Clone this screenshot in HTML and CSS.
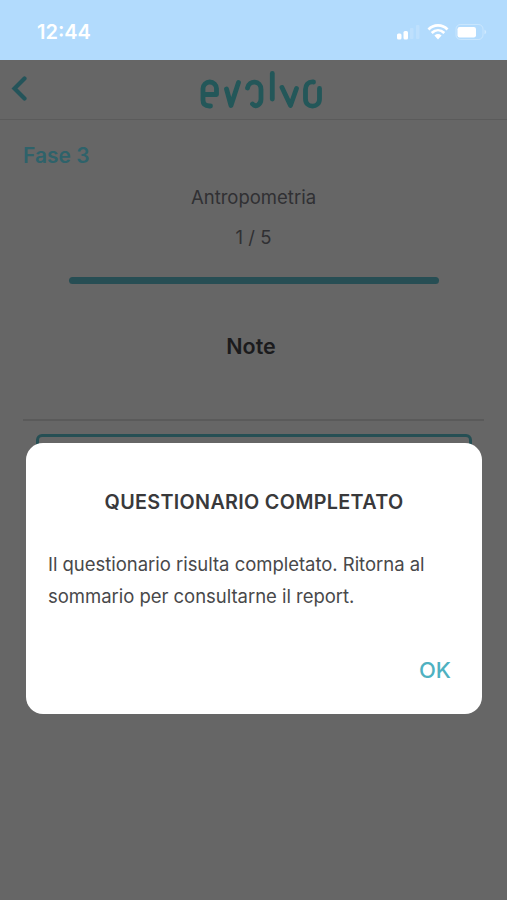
FILE: index.html
```html
<!DOCTYPE html>
<html lang="it">
<head>
<meta charset="utf-8">
<meta name="viewport" content="width=device-width, initial-scale=1">
<title>evolvo</title>
<link rel="stylesheet" href="styles.css">
</head>
<body>
<header class="status">
  <span class="time">12:44</span>
  <svg class="indicators" width="94" height="24" viewBox="0 0 94 24" fill="#fff">
    <rect x="3" y="13.500" width="4.500" height="6" rx="1.500"/>
    <rect x="9.500" y="11" width="4.500" height="8.500" rx="1.500"/>
    <rect x="16" y="8" width="3.500" height="11" rx="1" opacity=".16"/>
    <rect x="22" y="5" width="3.500" height="14" rx="1" opacity=".16"/>
    <g fill="none" stroke="#fff" stroke-width="2.700">
      <path d="M34.500 9.500C39.500 4 48.500 4 53.500 9.500"/>
      <path d="M37.700 13C41.500 9.300 46.500 9.300 50.300 13"/>
    </g>
    <path d="M40.400 15.400Q44 12.500 47.600 15.400L44 19.400Z"/>
    <rect x="62" y="4.500" width="27" height="15" rx="4.500" fill="none" stroke="#fff" opacity=".3"/>
    <rect x="63.500" y="7" width="18.500" height="10.500" rx="2.200"/>
    <path d="M90.500 9.500q3.500 2.500 0 5z" opacity=".4"/>
  </svg>
</header>
<nav class="bar">
  <svg class="back" width="16" height="26" viewBox="0 0 16 26"><path d="M13.500 2.500L3.500 12.500L13.500 22.500"/></svg>
  <svg class="logo" width="124" height="40" viewBox="0 0 124 40" role="img" aria-label="evolvo">
    <path d="M3 24.500H16.500V18.500A6.750 6.500 0 0 0 3 18.500V30Q3 36 9.500 36H10.500"/>
    <path d="M26.500 19L31 35.500L38.500 12.500"/>
    <path d="M47.500 18C49 10 61 10 61 19.500V29C61 35 55.500 37.500 52.500 34"/>
    <path d="M72.300 3.500V29"/>
    <path d="M82 17.500L90.500 35.500L96.500 18.500"/>
    <path d="M113.500 12C108 11.500 105.500 15 105.500 19.500V29C105.500 38.500 119.500 38.500 119.500 29V18.500"/>
  </svg>
</nav>
<main class="page">
  <h1 class="phase">Fase 3</h1>
  <p class="topic">Antropometria</p>
  <p class="count">1 / 5</p>
  <div class="progress"></div>
  <h2 class="note">Note</h2>
  <div class="field"></div>
  <section class="dialog" role="alertdialog" aria-labelledby="title">
    <h3 class="title" id="title">QUESTIONARIO COMPLETATO</h3>
    <p class="message">Il questionario risulta completato. Ritorna al<br>sommario per consultarne il report.</p>
    <button class="ok">OK</button>
  </section>
</main>
</body>
</html>
```
FILE: styles.css
```css
* { box-sizing: border-box; margin: 0; }
body {
  width: 507px;
  height: 900px;
  overflow: hidden;
  background: #666;
  color: #303033;
  font-family: Inter, "Liberation Sans", sans-serif;
}
.status {
  display: flex;
  justify-content: space-between;
  height: 60px;
  padding: 20px 19px 0 37px;
  background: #b2dbfd;
  color: #fff;
}
.time { font-size: 20px; font-weight: 600; line-height: 24px; }
.bar {
  display: grid;
  grid-template-columns: 200px 124px;
  height: 60px;
  border-bottom: 1px solid #5b5b5b;
}
.back, .logo {
  fill: none;
  stroke: #235759;
  stroke-linecap: round;
  stroke-linejoin: round;
}
.back { margin: 16px 0 0 11px; stroke: #24545a; stroke-width: 4.2; stroke-linejoin: miter; }
.logo { margin-top: 10px; stroke-width: 4.8; }
.page { display: flex; flex-direction: column; padding: 0 23px; }
.phase {
  margin-top: 22px;
  color: #2e626a;
  font-size: 21px;
  font-weight: 600;
  line-height: 28px;
}
.topic, .count {
  text-align: center;
  font-size: 18.5px;
  line-height: 26px;
}
.topic { margin-top: 14px; }
.count { margin-top: 14px; }
.progress { height: 7px; margin: 27px 45px 0 46px; border-radius: 4px; background: #274e54; }
.note {
  margin-top: 47px;
  padding-right: 5px;
  color: #1b1b1d;
  font-size: 21.5px;
  font-weight: 600;
  line-height: 30px;
  text-align: center;
}
.field {
  height: 24px;
  margin-top: 58px;
  padding: 13px 12px 0 13px;
  border-top: 2px solid #5a5a5a;
}
.field::before {
  content: "";
  display: block;
  height: 20px;
  border: 3px solid #264f54;
  border-radius: 6px;
}
.dialog {
  z-index: 1;
  display: flex;
  flex-direction: column;
  height: 271px;
  margin: 0 2px 0 3px;
  padding: 44px 22px 0;
  border-radius: 17px;
  background: #fff;
}
.title {
  color: #39393b;
  font-size: 19.8px;
  font-weight: 600;
  letter-spacing: .3px;
  line-height: 30px;
  text-align: center;
}
.message {
  margin-top: 31px;
  color: #48484a;
  font-size: 18.5px;
  letter-spacing: -.03px;
  line-height: 32px;
  white-space: nowrap;
}
.ok {
  align-self: flex-end;
  margin: 43px 9px 0 0;
  padding: 0;
  border: 0;
  background: none;
  color: #4eb1c1;
  font: 450 22px/30px Inter, sans-serif;
}
```
